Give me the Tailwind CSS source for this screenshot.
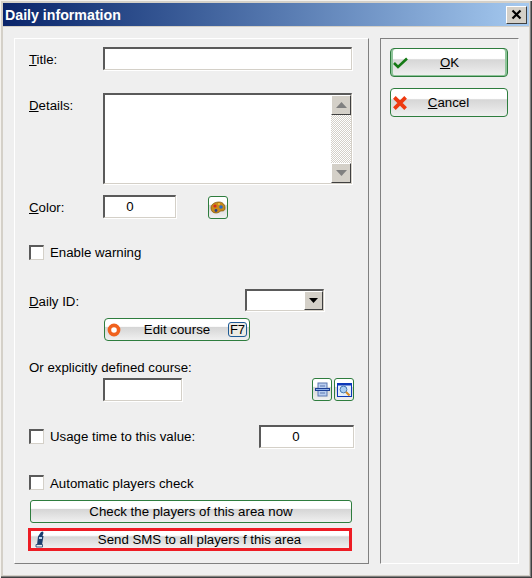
<!DOCTYPE html>
<html lang="en">
<head>
    <meta charset="UTF-8">
    <title>Daily information</title>
    <script src="https://cdn.jsdelivr.net/npm/@tailwindcss/browser@4"></script>
</head>
<body class="m-0 bg-[#efefef]">
    <!-- Window frame -->
    <div class="w-[532px] h-[578px] p-[3px] bg-[#d4d0c8] flex flex-col overflow-hidden font-['Liberation_Sans',Arial,sans-serif] text-[13.25px] text-black shadow-[inset_1px_1px_0_#f4f2ee,inset_-1px_-1px_0_#404040,inset_-2px_-2px_0_#808080]">
        <!-- Title bar -->
        <div class="h-[23px] shrink-0 flex items-center justify-between pl-[2px] pr-[2px] bg-gradient-to-r from-[#0a246a] to-[#a6caf0]">
            <span class="text-[14.2px] font-bold text-white mt-[2px]">Daily information</span>
            <div class="w-[21px] h-[18px] flex items-center justify-center bg-[#d4d0c8] border-t border-l border-white border-r border-b border-r-[#404040] border-b-[#404040]">
                <svg width="11" height="11" viewBox="0 0 11 11"><path d="M1.5 1.5 9.5 9.5M9.5 1.5 1.5 9.5" stroke="#000" stroke-width="2.2"/></svg>
            </div>
        </div>

        <!-- Client area -->
        <div class="flex-1 bg-[#efefef] border-t border-[#d4d0c8] flex items-start pl-[11px] pt-[11px]">
            <!-- Left group -->
            <div class="w-[355px] h-[526px] shrink-0 border border-t-white border-l-white border-r-[#808080] border-b-[#808080] pl-[14px] pt-2 flex flex-col">
                <!-- Title -->
                <div class="h-[23px] flex items-center">
                    <span class="w-[74px] mt-[3px]"><span class="underline">T</span>itle:</span>
                    <div class="w-[249px] h-[23px] bg-white border-t-2 border-l-2 border-[#5a5a5a] border-r border-b border-r-[#d4d0c8] border-b-[#d4d0c8] shadow-[1px_1px_0_#fff]"></div>
                </div>

                <!-- Details -->
                <div class="h-[91px] mt-[23px] flex items-start">
                    <span class="w-[74px] mt-[3px]"><span class="underline">D</span>etails:</span>
                    <div class="w-[249px] h-[91px] bg-white border-t-2 border-l-2 border-[#5a5a5a] border-r border-b border-r-[#d4d0c8] border-b-[#d4d0c8] shadow-[1px_1px_0_#fff] flex justify-end">
                        <div class="w-[20px] h-full flex flex-col bg-[repeating-conic-gradient(#d4d0c8_0_25%,#fff_0_50%)] bg-[length:2px_2px]">
                            <div class="h-[20px] flex items-center justify-center bg-[#d4d0c8] border-t border-l border-white border-r border-b border-r-[#404040] border-b-[#404040]">
                                <svg width="11" height="6" viewBox="0 0 11 6"><path d="M5.5 0 11 6H0z" fill="#808080"/></svg>
                            </div>
                            <div class="flex-1"></div>
                            <div class="h-[20px] flex items-center justify-center bg-[#d4d0c8] border-t border-l border-white border-r border-b border-r-[#404040] border-b-[#404040]">
                                <svg width="11" height="6" viewBox="0 0 11 6"><path d="M0 0H11L5.5 6z" fill="#808080"/></svg>
                            </div>
                        </div>
                    </div>
                </div>

                <!-- Color -->
                <div class="h-[23px] mt-[11px] flex items-start">
                    <span class="w-[74px] mt-[3px]"><span class="underline">C</span>olor:</span>
                    <div class="w-[73px] h-[23px] flex items-center justify-center pr-[20px] bg-white border-t-2 border-l-2 border-[#5a5a5a] border-r border-b border-r-[#d4d0c8] border-b-[#d4d0c8] shadow-[1px_1px_0_#fff]">0</div>
                    <div class="w-[20px] h-[23px] ml-[32px] mt-[1px] flex items-center justify-center rounded-[3px] border border-[#2e7d3e] bg-[linear-gradient(#fff_35%,#d6d6d6_40%,#f0f0f0)]">
                        <svg width="16" height="13" viewBox="0 0 16 13"><path d="M1 7C1 3 5 1 9 1s6 3 6 6c0 3-2 3-4 3-1 0-2 2-5 2C3 12 1 10 1 7z" fill="#c98a1a" stroke="#7a5510" stroke-width=".7"/><circle cx="5" cy="5" r="1.6" fill="#d8281e"/><circle cx="11" cy="6" r="1.8" fill="#2a6bc8"/><circle cx="6" cy="9.5" r="1.4" fill="#27408f"/><circle cx="9" cy="3" r="1.1" fill="#f0c040"/></svg>
                    </div>
                </div>

                <!-- Enable warning -->
                <div class="h-[15px] mt-[27px] flex items-center">
                    <div class="w-[15px] h-[15px] bg-white border-t-2 border-l-2 border-[#5a5a5a] border-r border-b border-r-[#d4d0c8] border-b-[#d4d0c8]"></div>
                    <span class="ml-[6px]">Enable warning</span>
                </div>

                <!-- Daily ID -->
                <div class="h-[22px] mt-[29px] flex items-center">
                    <span class="w-[216px] mt-[3px]"><span class="underline">D</span>aily ID:</span>
                    <div class="w-[79px] h-[22px] flex justify-end bg-white border-t-2 border-l-2 border-[#5a5a5a] border-r border-b border-r-[#d4d0c8] border-b-[#d4d0c8] shadow-[1px_1px_0_#fff]">
                        <div class="w-[19px] h-full flex items-center justify-center bg-[#d4d0c8] border-t border-l border-white border-r border-b border-r-[#404040] border-b-[#404040]">
                            <svg width="9" height="5" viewBox="0 0 9 5"><path d="M0 0H9L4.5 5z" fill="#000"/></svg>
                        </div>
                    </div>
                </div>

                <!-- Edit course -->
                <div class="w-[146px] h-[23px] mt-[7px] ml-[75px] flex items-center pl-[2px] pr-[2px] rounded-[4px] border border-[#2e7d3e] bg-[linear-gradient(#fff_35%,#d6d6d6_40%,#f0f0f0)]">
                    <svg width="14" height="14" viewBox="0 0 14 14"><circle cx="7" cy="7" r="4.6" fill="#fff" stroke="#f0621e" stroke-width="3.6"/></svg>
                    <span class="flex-1 text-center pl-[5px]">Edit course</span>
                    <span class="w-[19px] h-[15px] flex items-center justify-center text-[13px] rounded-[3px] border-[1.5px] border-[#1d5a96] bg-[#ecebe4]">F7</span>
                </div>

                <!-- Explicit course -->
                <div class="h-[15px] mt-[19px] flex items-center">Or explicitly defined course:</div>
                <div class="h-[23px] mt-[3px] flex items-start pl-[74px]">
                    <div class="w-[79px] h-[23px] bg-white border-t-2 border-l-2 border-[#5a5a5a] border-r border-b border-r-[#d4d0c8] border-b-[#d4d0c8] shadow-[1px_1px_0_#fff]"></div>
                    <div class="w-[20px] h-[23px] ml-[130px] flex items-center justify-center rounded-[3px] border border-[#2e7d3e] bg-[linear-gradient(#fff_35%,#d6d6d6_40%,#f0f0f0)]">
                        <svg width="15" height="15" viewBox="0 0 15 15"><rect x="3" y="1" width="9" height="13" fill="#b9cdf0" stroke="#5c78b0"/><path d="M5 4h5M5 11h5" stroke="#5c78b0"/><rect x="0" y="6" width="15" height="3" fill="#1c3f94"/><rect x="1" y="7" width="13" height="1" fill="#8fb0e8"/></svg>
                    </div>
                    <div class="w-[20px] h-[23px] ml-[2px] flex items-center justify-center rounded-[3px] border border-[#2e7d3e] bg-[linear-gradient(#fff_35%,#d6d6d6_40%,#f0f0f0)]">
                        <svg width="15" height="14" viewBox="0 0 15 14"><rect x=".5" y=".5" width="14" height="13" fill="#e4eefa" stroke="#0c38b8"/><rect x="1" y="1" width="13" height="1.5" fill="#0c38b8"/><circle cx="6.5" cy="6.5" r="3.4" fill="#a9cdf2" stroke="#4a7ab0"/><path d="M9 9 12.5 12.5" stroke="#d88a20" stroke-width="2"/></svg>
                    </div>
                </div>

                <!-- Usage time -->
                <div class="h-[23px] mt-[24px] flex items-center">
                    <div class="w-[15px] h-[15px] bg-white border-t-2 border-l-2 border-[#5a5a5a] border-r border-b border-r-[#d4d0c8] border-b-[#d4d0c8]"></div>
                    <span class="w-[209px] ml-[6px]">Usage time to this value:</span>
                    <div class="w-[95px] h-[23px] flex items-center justify-center pr-[22px] bg-white border-t-2 border-l-2 border-[#5a5a5a] border-r border-b border-r-[#d4d0c8] border-b-[#d4d0c8] shadow-[1px_1px_0_#fff]">0</div>
                </div>

                <!-- Automatic check -->
                <div class="h-[15px] mt-[27px] flex items-center">
                    <div class="w-[15px] h-[15px] bg-white border-t-2 border-l-2 border-[#5a5a5a] border-r border-b border-r-[#d4d0c8] border-b-[#d4d0c8]"></div>
                    <span class="ml-[6px] mt-[2px]">Automatic players check</span>
                </div>

                <div class="w-[322px] h-[23px] mt-[10px] ml-[1px] flex items-center justify-center rounded-[3px] border border-[#2e7d3e] bg-[linear-gradient(#fff_35%,#d6d6d6_40%,#f0f0f0)]">Check the players of this area now</div>

                <div class="w-[324px] h-[23px] mt-[5px] -ml-[1px] flex items-center pl-[4px] border-[3px] border-[#ed1c24] bg-[linear-gradient(#fff_25%,#d6d6d6_35%,#f0f0f0)]">
                    <svg width="10" height="17" viewBox="0 0 10 17"><path d="M6 1 8 0.5 8.5 2 7.5 5H8.5L7 14H2L3 5.5z" fill="#1c3f6e"/><rect x="4" y="6" width="3" height="2" fill="#b8d4ee"/><path d="M1 13.5H7.5V16H1z" fill="#e8e8e8" stroke="#1c3f6e" stroke-width=".8"/></svg>
                    <span class="flex-1 text-center pl-[5px]">Send SMS to all players f this area</span>
                </div>
            </div>

            <!-- Right group -->
            <div class="w-[139px] h-[526px] shrink-0 ml-[11px] border border-t-[#808080] border-l-[#808080] border-r-white border-b-white pl-[9px] pt-[9px] flex flex-col">
                <div class="w-[118px] h-[29px] flex items-center pl-[2px] rounded-[4px] border border-[#2e7d3e] shadow-[inset_2px_0_0_#8fc49a,inset_-2px_0_0_#8fc49a,inset_0_-1px_0_#8fc49a] bg-[linear-gradient(#fff_35%,#d6d6d6_40%,#f0f0f0)]">
                    <svg width="15" height="12" viewBox="0 0 15 12"><path d="M1 6 5 10 14 1.5" fill="none" stroke="#157a15" stroke-width="2.6"/></svg>
                    <span class="flex-1 text-center pr-[16px]"><span class="underline">O</span>K</span>
                </div>
                <div class="w-[118px] h-[29px] mt-[11px] flex items-center pl-[3px] rounded-[4px] border border-[#2e7d3e] bg-[linear-gradient(#fff_35%,#d6d6d6_40%,#f0f0f0)]">
                    <svg width="12" height="12" viewBox="0 0 12 12" class="scale-125"><path d="M1.5 1.5 10.5 10.5M10.5 1.5 1.5 10.5" stroke="#ee3a10" stroke-width="3"/></svg>
                    <span class="flex-1 text-center pr-[16px]"><span class="underline">C</span>ancel</span>
                </div>
            </div>
        </div>
    </div>
</body>
</html>
